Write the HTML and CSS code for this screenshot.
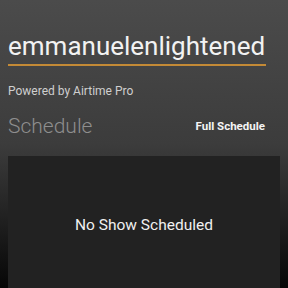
FILE: index.html
```html
<!DOCTYPE html>
<html lang="en">
<head>
    <meta charset="UTF-8">
    <title>Airtime Pro Station</title>
    <link rel="stylesheet" href="styles.css">
</head>
<body>
    <header class="station">
        <h1 class="stationName">emmanuelenlightened</h1>
        <p class="poweredBy">Powered by Airtime Pro</p>
    </header>
    <section class="schedule">
        <div class="scheduleHead">
            <h2>Schedule</h2>
            <a class="fullSchedule" href="#">Full Schedule</a>
        </div>
        <div class="showCard">
            <p>No Show Scheduled</p>
        </div>
    </section>
</body>
</html>
```

FILE: styles.css
```css
html, body {
    height: 100%;
}
body {
    margin: 0;
    padding: 0 8px;
    box-sizing: border-box;
    font-family: Roboto, "Noto Sans", sans-serif;
    background: linear-gradient(#4b4b4b 0%, #3c3c3c 50%, #272727 70%, #060606 100%);
    display: flex;
    flex-direction: column;
    overflow: hidden;
}

.station {
    padding-top: 31px;
}
.stationName {
    margin: 0;
    font-size: 26px;
    font-weight: 400;
    color: #f2f2f2;
    line-height: 30px;
    width: 258px;
    border-bottom: 2px solid #c48a36;
    padding-bottom: 3px;
}
.poweredBy {
    margin: 17px 0 0;
    font-size: 12px;
    line-height: 16px;
    color: #cfcfcf;
}

.schedule {
    flex: 1;
    display: flex;
    flex-direction: column;
}
.scheduleHead {
    display: flex;
    justify-content: space-between;
    align-items: center;
    margin-top: 12px;
    height: 30px;
}
.scheduleHead h2 {
    margin: 0;
    font-size: 21px;
    font-weight: 300;
    color: #8e8e8e;
}
.fullSchedule {
    font-size: 11.5px;
    font-weight: 700;
    color: #f4f4f4;
    text-decoration: none;
    margin-right: 15px;
}

.showCard {
    flex: 1;
    margin-top: 15px;
    background-color: #222222;
    display: flex;
    justify-content: center;
    padding-top: 60px;
}
.showCard p {
    margin: 0;
    font-size: 15.5px;
    color: #f0f0f0;
}
```
